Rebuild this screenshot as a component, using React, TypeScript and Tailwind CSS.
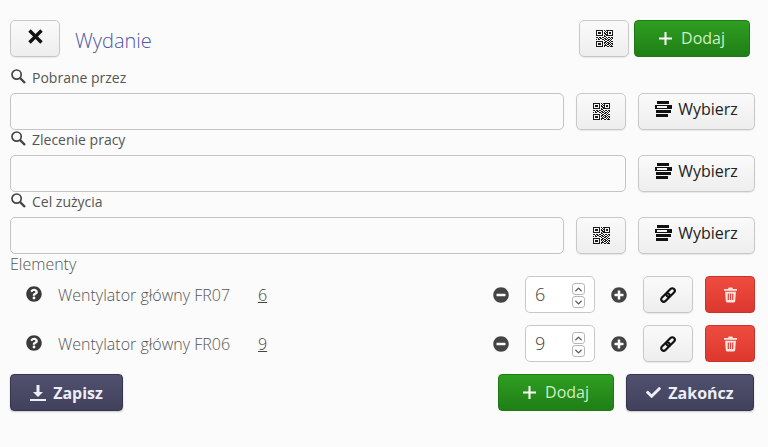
import React from 'react'
import { ChevronDown, ChevronUp } from 'lucide-react'
import { FaCheck, FaMinusCircle, FaPlusCircle, FaQuestionCircle } from 'react-icons/fa'

const lightBtn =
  'flex items-center justify-center h-[37px] rounded-[5px] border border-[#c8c8c8] bg-gradient-to-b from-[#fafafa] to-[#eeeeee] text-[#222] shadow-[0_1px_1px_rgba(0,0,0,0.08)]'
const greenBtn =
  'flex items-center justify-center h-[37px] w-[116px] rounded-[4px] border border-[#1f7a14] bg-gradient-to-b from-[#2f9e22] to-[#1f7f15] text-[#cdeec6] text-[16px]'
const darkBtn =
  'flex items-center justify-center h-[37px] rounded-[4px] border border-[#35354f] bg-gradient-to-b from-[#51516f] to-[#41415c] text-[#eceef8] text-[16px] font-bold shadow-[0_1px_2px_rgba(0,0,0,0.2)]'

const QR_ROWS = [
  '11111110101111111',
  '10000010010100001',
  '10111010101101101',
  '10111010110101101',
  '10000010011100001',
  '11111110101111111',
  '00000000110000000',
  '11011011001011011',
  '00101100110100101',
  '10110011011011010',
  '00000000100110100',
  '11111110011001011',
  '10000010110110100',
  '10111010101011011',
  '10111010010110101',
  '10000010111001010',
  '11111110100110111',
]

const QrIcon = () => (
  <svg viewBox="0 0 17 17" className="w-[17px] h-[17px]" shapeRendering="crispEdges" fill="#1a1a1a">
    {QR_ROWS.flatMap((row, y) =>
      row.split('').map((c, x) => (c === '1' ? <rect key={`${x}-${y}`} x={x} y={y} width="1" height="1" /> : null)),
    )}
  </svg>
)

const ListIcon = () => (
  <svg viewBox="0 0 17 17" className="w-[17px] h-[17px] -mt-[4px]" fill="#111" shapeRendering="crispEdges">
    <rect x="2" y="0" width="12" height="3" />
    <path fillRule="evenodd" d="M0 4h17v4H0z M2 5v2h10V5z" />
    <rect x="1" y="9" width="15" height="3" />
    <rect x="1" y="13" width="12" height="3" />
  </svg>
)

const LinkIcon = () => (
  <svg viewBox="0 0 18 18" className="w-[18px] h-[18px]" fill="none" stroke="#111" strokeWidth="2.2">
    <rect x="9" y="1.5" width="5" height="10" rx="2.5" transform="rotate(45 11.5 6.5)" />
    <rect x="4" y="6.5" width="5" height="10" rx="2.5" transform="rotate(45 6.5 11.5)" />
  </svg>
)

const TrashIcon = () => (
  <svg viewBox="0 0 14 16" className="w-[13px] h-[16px]" fill="#fbe6e2">
    <path d="M5 0h4l.6 1.5H14v2H0v-2h4.4z" />
    <path
      fillRule="evenodd"
      d="M1.2 4.5h11.6l-.7 10a1.5 1.5 0 0 1-1.5 1.5H3.4a1.5 1.5 0 0 1-1.5-1.5z M4 6.5v7h1.3v-7z M6.35 6.5v7h1.3v-7z M8.7 6.5v7H10v-7z"
    />
  </svg>
)

const SearchIcon = () => (
  <svg viewBox="0 0 15 15" className="w-[15px] h-[15px] ml-[1px] mr-[6px] -mt-[8px]" fill="none" stroke="#444">
    <circle cx="5.6" cy="5.6" r="4.6" strokeWidth="1.7" />
    <path d="M9 9l5 5" strokeWidth="2.4" />
  </svg>
)

const QrButton = () => (
  <button className={`${lightBtn} w-[50px] shrink-0`}>
    <QrIcon />
  </button>
)

const PickButton = () => (
  <button className={`${lightBtn} w-[117px] shrink-0 gap-[6px] text-[16px] text-[#222]`}>
    <ListIcon />
    <span className="-mt-[5px]">Wybierz</span>
  </button>
)

const AddButton = () => (
  <button className={greenBtn}>
    <svg viewBox="0 0 13 13" className="w-[13px] h-[13px] mr-[9px] -mt-[1px]" stroke="#fff" strokeWidth="2">
      <path d="M6.5 0v13M0 6.5h13" />
    </svg>
    <span className="-mt-[2px]">Dodaj</span>
  </button>
)

const FieldLabel = ({ text }: { text: string }) => (
  <div className="h-[25px] flex items-center text-[14px] leading-none text-[#555]">
    <SearchIcon />
    <span className="-mt-[6px]">{text}</span>
  </div>
)

const Field = ({ label, qr = true }: { label: string; qr?: boolean }) => (
  <div>
    <FieldLabel text={label} />
    <div className="flex items-center gap-3">
      <input className="flex-1 min-w-0 h-[37px] rounded-[5px] border border-[#c4c4c4] bg-[#fbfbfb]" />
      {qr && <QrButton />}
      <PickButton />
    </div>
  </div>
)

const ItemRow = ({ name, qty }: { name: string; qty: number }) => (
  <div className="flex items-center h-[37px]">
    <FaQuestionCircle className="w-[16px] h-[16px] ml-[16px] -mt-[2px] text-[#3a3a3a]" />
    <span className="ml-[16px] w-[200px] text-[16px] font-light text-[#555]">{name}</span>
    <span className="text-[16px] font-light text-[#444] underline">{qty}</span>
    <FaMinusCircle className="w-[16px] h-[16px] ml-auto text-[#444]" />
    <div className="relative w-[70px] h-[37px] ml-[16px] rounded-[5px] border border-[#c8c8c8] bg-white flex items-center pl-[9px] text-[18px] font-light text-[#444]">
      {qty}
      <div className="absolute right-[9px] top-[6px] flex flex-col gap-[1px]">
        <span className="w-[13px] h-[12px] rounded-[3px] border border-[#b8b8b8] flex items-center justify-center">
          <ChevronUp className="w-[11px] h-[11px] text-[#555]" strokeWidth={3} />
        </span>
        <span className="w-[13px] h-[12px] rounded-[3px] border border-[#b8b8b8] flex items-center justify-center">
          <ChevronDown className="w-[11px] h-[11px] text-[#555]" strokeWidth={3} />
        </span>
      </div>
    </div>
    <FaPlusCircle className="w-[16px] h-[16px] ml-[16px] text-[#444]" />
    <button className={`${lightBtn} w-[50px] ml-[16px]`}>
      <LinkIcon />
    </button>
    <button className="flex items-center justify-center w-[50px] h-[37px] ml-[12px] rounded-[4px] border border-[#c9322a] bg-gradient-to-b from-[#ef4c40] to-[#dd372e]">
      <TrashIcon />
    </button>
  </div>
)

export default function App() {
  return (
    <div
      className="w-[768px] h-[447px] overflow-hidden bg-[#fbfbfb] pt-5 pl-[10px] pr-[13px]"
      style={{ fontFamily: '"Open Sans", sans-serif' }}
    >
      <div className="flex items-center">
        <button className={`${lightBtn} w-[50px]`}>
          <svg viewBox="0 0 15 15" className="w-[15px] h-[15px] -mt-[5px]" stroke="#111" strokeWidth="3.4">
            <path d="M1.5 1.5l12 12M13.5 1.5l-12 12" />
          </svg>
        </button>
        <h1 className="ml-[15px] mt-[4px] text-[20px] font-light text-[#5155a0]">Wydanie</h1>
        <div className="ml-auto mr-[5px] flex gap-[5px]">
          <QrButton />
          <AddButton />
        </div>
      </div>

      <div className="mt-[11px]">
        <Field label="Pobrane przez" />
        <Field label="Zlecenie pracy" qr={false} />
        <Field label="Cel zużycia" />
      </div>

      <div className="h-[22px] flex items-center text-[16px] font-light text-[#555]">
        <span className="-mt-[2px]">Elementy</span>
      </div>

      <div className="flex flex-col gap-[12px]">
        <ItemRow name="Wentylator główny FR07" qty={6} />
        <ItemRow name="Wentylator główny FR06" qty={9} />
      </div>

      <div className="flex items-center mt-[12px]">
        <button className={`${darkBtn} w-[113px]`}>
          <svg viewBox="0 0 16 16" className="w-[16px] h-[16px] mr-[7px]" fill="currentColor">
            <path d="M6.5 0h3v7H13L8 12 3 7h3.5z" />
            <rect x="0" y="14" width="16" height="2" />
          </svg>
          <span>Zapisz</span>
        </button>
        <div className="ml-auto flex gap-3 mr-[1px]">
          <AddButton />
          <button className={`${darkBtn} w-[128px]`}>
            <FaCheck className="w-[15px] h-[15px] mr-[7px]" />
            <span>Zakończ</span>
          </button>
        </div>
      </div>
    </div>
  )
}
